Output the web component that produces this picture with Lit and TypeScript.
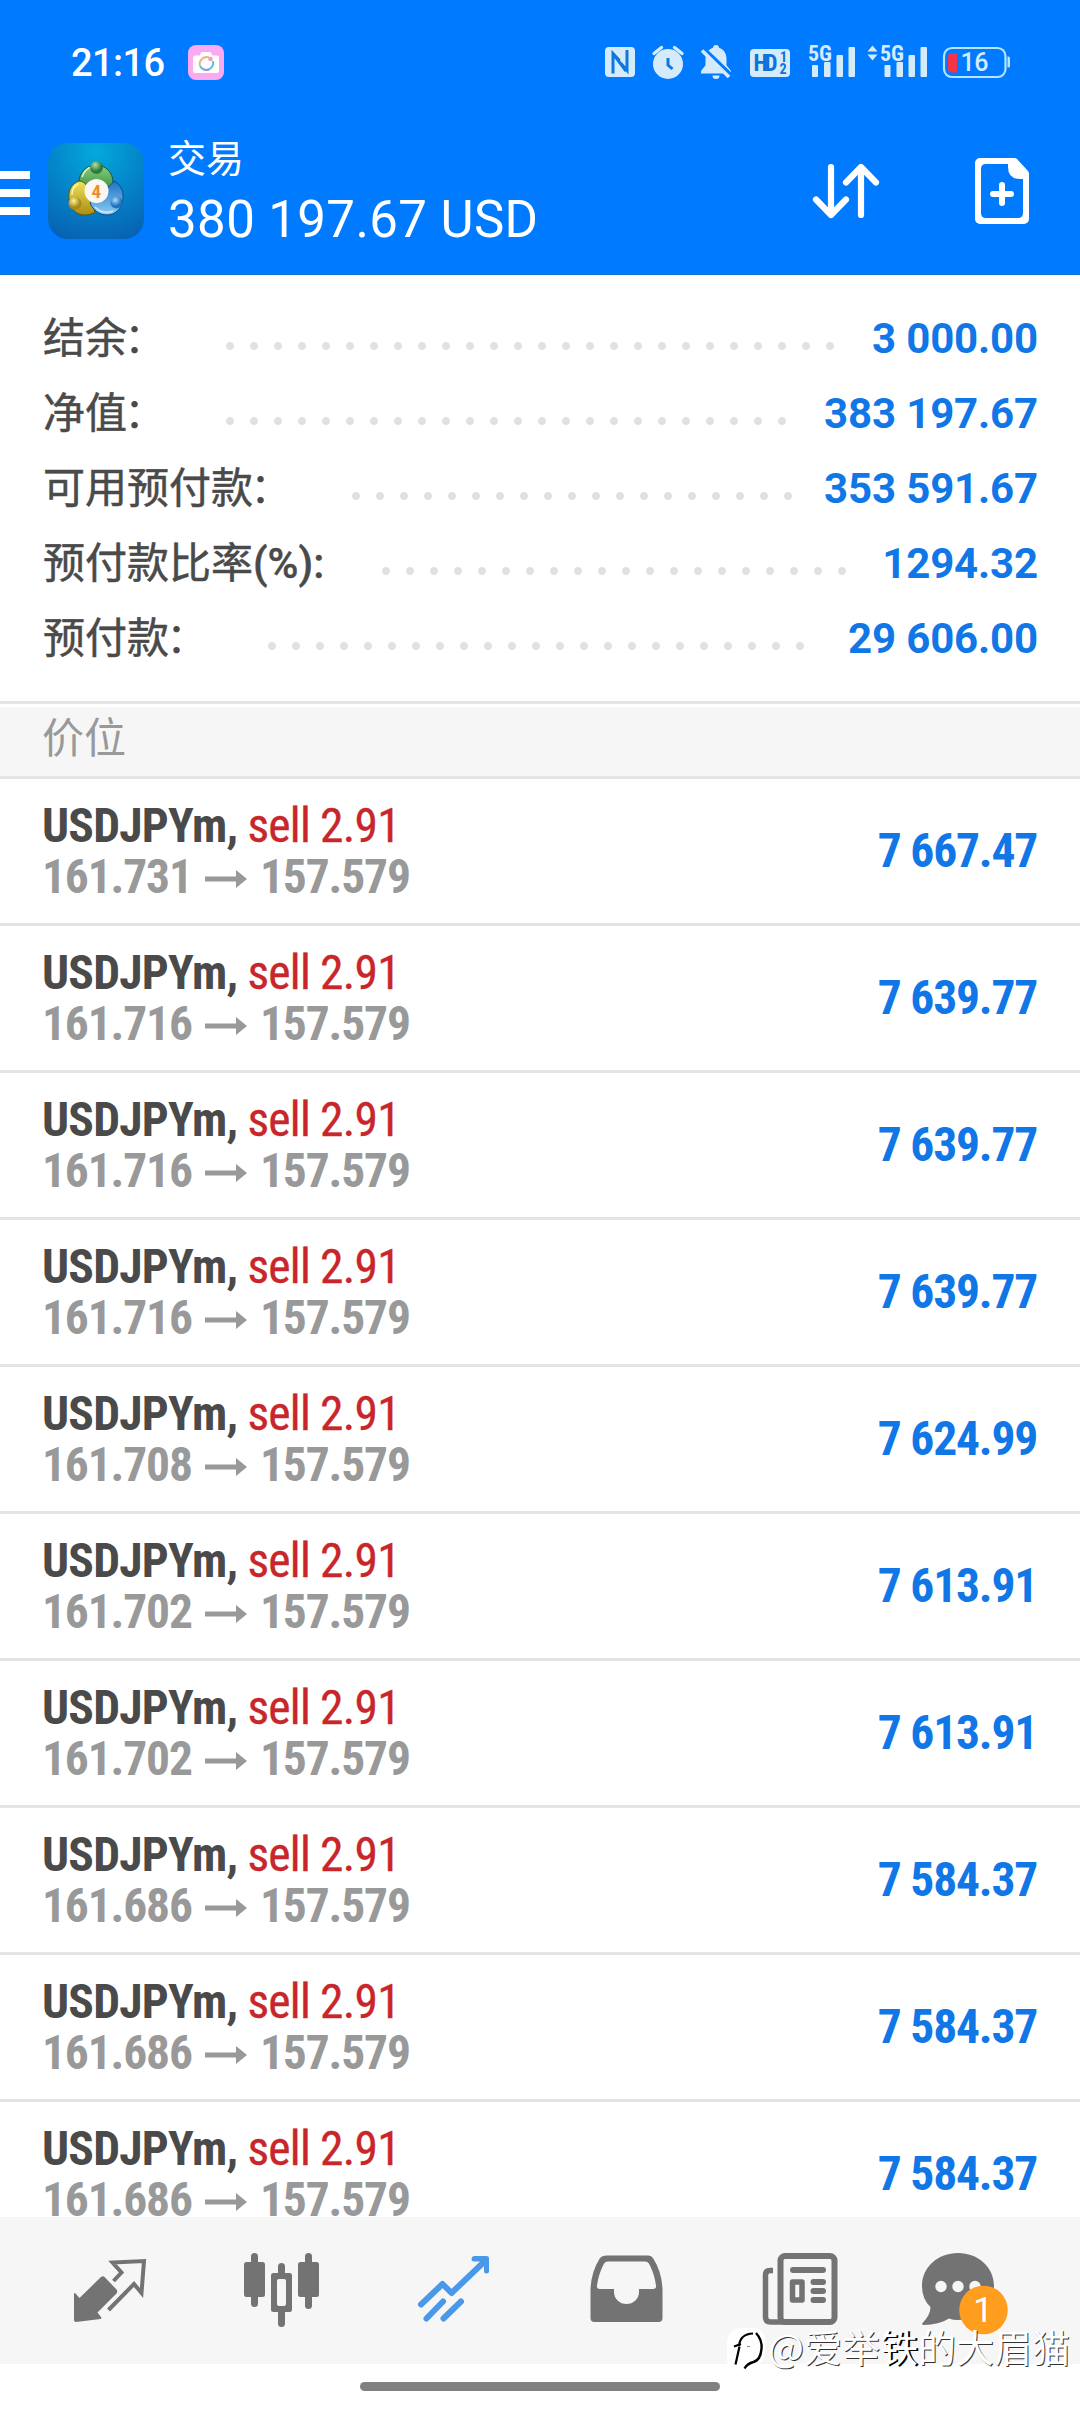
import { LitElement, html, css, svg } from "lit";
import { customElement, property } from "lit/decorators.js";

interface SummaryItem {
  label: string;
  value: string;
  dots: number;
}

interface Position {
  open: string;
  profit: string;
}

const SUMMARY: SummaryItem[] = [
  { label: "结余：", value: "3 000.00", dots: 26 },
  { label: "净值：", value: "383 197.67", dots: 24 },
  { label: "可用预付款：", value: "353 591.67", dots: 19 },
  { label: "预付款比率(%):", value: "1294.32", dots: 20 },
  { label: "预付款：", value: "29 606.00", dots: 23 },
];

const POSITIONS: Position[] = [
  { open: "161.731", profit: "7 667.47" },
  { open: "161.716", profit: "7 639.77" },
  { open: "161.716", profit: "7 639.77" },
  { open: "161.716", profit: "7 639.77" },
  { open: "161.708", profit: "7 624.99" },
  { open: "161.702", profit: "7 613.91" },
  { open: "161.702", profit: "7 613.91" },
  { open: "161.686", profit: "7 584.37" },
  { open: "161.686", profit: "7 584.37" },
  { open: "161.686", profit: "7 584.37" },
];

@customElement("status-bar")
class StatusBar extends LitElement {
  static styles = css`
    :host {
      display: flex;
      align-items: center;
      height: 107px;
      box-sizing: border-box;
      padding: 0 66px 0 71px;
      color: #fff;
    }
    .time {
      font: 500 38px/44px Roboto, "Noto Sans", sans-serif;
      letter-spacing: -0.6px;
      padding-top: 19px;
    }
    .camera {
      width: 36px;
      height: 35px;
      margin: 18px auto 0 24px;
    }
    .icons {
      width: 410px;
      height: 40px;
      margin-top: 17px;
    }
    .tiny {
      font-family: "Roboto Condensed", Roboto, sans-serif;
      font-weight: 700;
    }
    .level {
      font-family: Roboto, sans-serif;
      font-weight: 500;
    }
  `;

  render() {
    return html`
      <span class="time">21:16</span>
      <svg class="camera" viewBox="0 0 36 35">
        <rect width="36" height="35" rx="8" fill="#f9aaf2" />
        <path d="M7 10.500h4.500l2-3.500h9l2 3.500h4.500a2 2 0 0 1 2 2V26a2 2 0 0 1-2 2H7a2 2 0 0 1-2-2V12.500a2 2 0 0 1 2-2z" fill="#fff" />
        <path d="M21 12.500A7 7 0 0 0 12 21" fill="none" stroke="#efb08c" stroke-width="2" />
        <path d="M12 21a7 7 0 0 0 13-5" fill="none" stroke="#5fbfd8" stroke-width="2" />
        <path d="M15 24a7 7 0 0 0 6 .6" fill="none" stroke="#a98be0" stroke-width="2" />
        <circle cx="22.500" cy="14" r="2.300" fill="#f2a0c0" />
      </svg>
      <svg class="icons" viewBox="604 42 410 40" fill="#d4ebfb">
        <rect x="605" y="47" width="30" height="30" rx="4" />
        <path d="M613 73.500V53.500l6.500 7M613 53.500l13 17.500M627 50v20.500l-6-7" fill="none" stroke="#0f78e0" stroke-width="3" />
        <circle cx="668" cy="64" r="15" />
        <path d="M654 53.500l7.500-6M674.500 47.500l7.500 6" stroke="#d4ebfb" stroke-width="3.400" stroke-linecap="round" />
        <path d="M668 58v7l4.500 4" fill="none" stroke="#0f78e0" stroke-width="3" />
        <path d="M716 45a3 3 0 0 1 3 2.800c5 1.600 7.500 6 7.500 11v6.500l4.500 5.700v2.500h-30v-2.500l4.500-5.700v-6.500c0-5 2.500-9.400 7.500-11A3 3 0 0 1 716 45zM712.500 75.500h7a3.500 3.500 0 0 1-7 0z" />
        <path d="M703.500 48.500l28 27" stroke="#007aff" stroke-width="4" />
        <path d="M702 50.500l27 26.500" stroke="#d4ebfb" stroke-width="3.600" />
        <rect x="750" y="49" width="40" height="28" rx="4" />
        <text class="tiny" x="753.500" y="71" font-size="23" fill="#0b74dc" textLength="24">HD</text>
        <text class="tiny" x="780" y="62" font-size="14" fill="#0b74dc">1</text>
        <text class="tiny" x="779.500" y="74" font-size="14" fill="#0b74dc">2</text>
        <text class="tiny" x="808" y="60.500" font-size="22">5G</text>
        <rect x="812" y="65" width="6" height="12" rx="1" />
        <rect x="824" y="62" width="6.500" height="15" rx="1" />
        <rect x="836.500" y="55" width="6.500" height="22" rx="1" />
        <rect x="848.500" y="47" width="6.500" height="30" rx="1" />
        <path d="M867.500 51.500l5-6 5 6zM867.500 54.500l5 6 5-6z" />
        <text class="tiny" x="880" y="60.500" font-size="22">5G</text>
        <rect x="884.500" y="65" width="6" height="12" rx="1" />
        <rect x="896.500" y="62" width="6.500" height="15" rx="1" />
        <rect x="908.500" y="55" width="6.500" height="22" rx="1" />
        <rect x="920.500" y="47" width="6.500" height="30" rx="1" />
        <rect x="944" y="48" width="61.500" height="29" rx="8" fill="none" stroke="#b5e4fb" stroke-width="2.200" />
        <path d="M1007.500 56.500h1a1.500 1.500 0 0 1 1.500 1.500v8a1.500 1.500 0 0 1-1.500 1.500h-1z" fill="#b5e4fb" />
        <path d="M952 53h5v19.500h-5q-4 0-4-4V57q0-4 4-4z" fill="#f5344c" />
        <text class="level" x="960.500" y="71" font-size="25" textLength="28">16</text>
      </svg>
    `;
  }
}

@customElement("app-bar")
class AppBar extends LitElement {
  static styles = css`
    :host {
      display: flex;
      align-items: center;
      height: 168px;
      box-sizing: border-box;
      padding-right: 51px;
      color: #fff;
      box-shadow: inset 0 -1px #1272d0;
    }
    .menu {
      display: flex;
      flex-direction: column;
      gap: 10px;
      width: 30px;
      padding-top: 4px;
      margin-right: 18px;
    }
    .bar {
      height: 8px;
      background: #fff;
    }
    .logo {
      width: 96px;
      height: 96px;
      margin-right: 24px;
    }
    .four {
      font: 700 19px "Roboto Condensed", Roboto, sans-serif;
    }
    .titles {
      flex: 1;
      display: flex;
      flex-direction: column;
      gap: 12px;
      padding-top: 2px;
    }
    .title {
      font: 400 38px/44px "Noto Sans CJK SC", sans-serif;
    }
    .total {
      font: 400 51px/60px Roboto, sans-serif;
      letter-spacing: 0.4px;
    }
    .action {
      display: block;
    }
    .sort {
      width: 72px;
      height: 72px;
      margin-right: 93px;
    }
    .add {
      width: 54px;
      height: 66px;
    }
  `;

  render() {
    return html`
      <div class="menu"><div class="bar"></div><div class="bar"></div><div class="bar"></div></div>
      <svg class="logo" viewBox="0 0 96 96">
        <defs>
          <radialGradient id="bg" cx="0.500" cy="0.100" r="0.950">
            <stop offset="0" stop-color="#03a9dc" />
            <stop offset="0.450" stop-color="#0488cc" />
            <stop offset="1" stop-color="#0862b4" />
          </radialGradient>
          <linearGradient id="gr" x2="0" y2="1"><stop stop-color="#8dcf7c" /><stop offset="1" stop-color="#1f7c38" /></linearGradient>
          <linearGradient id="ye" x2="0" y2="1"><stop stop-color="#efe25c" /><stop offset="1" stop-color="#a98d12" /></linearGradient>
          <linearGradient id="bl" x2="0" y2="1"><stop stop-color="#1f74c4" /><stop offset="1" stop-color="#8ccbf4" /></linearGradient>
          <radialGradient id="gh" cx="0.400" cy="0.300"><stop stop-color="#b5dfa8" /><stop offset="1" stop-color="#2c7a3c" /></radialGradient>
          <radialGradient id="yh" cx="0.400" cy="0.300"><stop stop-color="#fdf3a0" /><stop offset="1" stop-color="#a58a14" /></radialGradient>
          <radialGradient id="bh" cx="0.400" cy="0.300"><stop stop-color="#a8dcff" /><stop offset="1" stop-color="#1d72c0" /></radialGradient>
        </defs>
        <rect width="96" height="96" rx="20" fill="url(#bg)" />
        <path d="M48 22c10 0 17 8 17 17 0 6-3 12-7 15L38 54c-4-3-7-9-7-15 0-9 7-17 17-17z" fill="url(#gr)" stroke="#14563a" />
        <path d="M34 34q3-8 9-10" fill="none" stroke="#d8f2c8" stroke-width="1.500" />
        <path d="M31 38c-8 3-11 10-10 18 1 9 6 15 14 16 5 .5 9-1 12-3L40 44c-3-4-6-6-9-6z" fill="url(#ye)" stroke="#5c5410" />
        <path d="M24 52q0-8 6-11" fill="none" stroke="#fbf6b0" stroke-width="1.500" />
        <path d="M66 38c6 3 10 10 9 18-1 10-8 16-16 16-8 0-14-5-17-12l14-14c4-1 7-4 10-8z" fill="url(#bl)" stroke="#0d4a88" />
        <path d="M47 64q8 8 18 4" fill="none" stroke="#cfeaff" stroke-width="1.500" />
        <circle cx="48.500" cy="48" r="12" fill="#fdf7f2" />
        <text class="four" x="43.500" y="55" fill="#f08c2c">4</text>
        <circle cx="48.500" cy="24.500" r="6.500" fill="url(#gh)" />
        <circle cx="27" cy="60.500" r="6.500" fill="url(#yh)" />
        <circle cx="68.500" cy="59.500" r="6" fill="url(#bh)" />
      </svg>
      <div class="titles">
        <div class="title">交易</div>
        <div class="total">380 197.67 USD</div>
      </div>
      <svg class="action sort" viewBox="810 155 72 72" fill="none" stroke="#fff" stroke-width="6.200" stroke-linecap="round" stroke-linejoin="round">
        <path d="M831 167v48M816 199.500l15 15.500 15-15.500M861 215v-48M846 182.500l15-15.500 15 15.500" />
      </svg>
      <svg class="action add" viewBox="975 158 54 66">
        <path fill="#fff" fill-rule="evenodd" d="M980 158h34.500q1.500 0 2.500 1l11 12q1 1 1 2.500V219a5 5 0 0 1-5 5h-44a5 5 0 0 1-5-5v-56a5 5 0 0 1 5-5zM986 164q-5 0-5 5v44q0 5 5 5h32q5 0 5-5v-34h-3q-12 0-12-12v-3z" />
        <path d="M1002 185v18M993 194h18" stroke="#fff" stroke-width="6" stroke-linecap="round" />
      </svg>
    `;
  }
}

@customElement("summary-row")
class SummaryRow extends LitElement {
  @property({ attribute: false }) item!: SummaryItem;

  static styles = css`
    :host {
      display: flex;
      align-items: center;
      height: 75px;
      line-height: 75px;
    }
    .label {
      font-family: Roboto, "Noto Sans CJK SC", sans-serif;
      font-size: 42px;
      font-weight: 500;
      color: #4a4a4a;
      white-space: nowrap;
    }
    .cjk {
      font-weight: 400;
      -webkit-text-stroke: 0.5px #4a4a4a;
    }
    .colon {
      margin: 0 3px 0 -3px;
      font-weight: 400;
    }
    .ratio {
      margin-right: 1px;
      -webkit-text-stroke: 0.4px #4a4a4a;
    }
    .leader {
      height: 24px;
      margin: 15px 0 0 49px;
      background: radial-gradient(circle at center, #e1e1e1 3.5px, transparent 4.500px) 0 0 / 24px 24px repeat-x;
    }
    .value {
      margin-left: auto;
      font: 700 42px/75px Roboto, sans-serif;
      letter-spacing: -0.15px;
      color: #1177e6;
    }
  `;

  render() {
    const { label, value, dots } = this.item;
    const [, cjk, colon, rest] = label.match(/^([^(：]*)(：?)(.*)$/)!;
    return html`
      <span class="label"
        ><span class="cjk">${cjk}</span>${colon
          ? html`<span class="colon">${colon}</span>`
          : html`<span class="ratio">${rest}</span>`}</span
      >
      <span class="leader" style="width:${dots * 24}px"></span>
      <span class="value">${value}</span>
    `;
  }
}

@customElement("position-row")
class PositionRow extends LitElement {
  @property({ attribute: false }) position!: Position;

  static styles = css`
    :host {
      display: flex;
      align-items: center;
      justify-content: space-between;
      height: 147px;
      box-sizing: border-box;
      padding: 2px 43px 0 42px;
      border-bottom: 3px solid #e4e4e4;
      font: 700 47.5px/51px "Roboto Condensed", Roboto, sans-serif;
      white-space: nowrap;
    }
    .symbol {
      color: #4a4a4a;
      letter-spacing: -0.78px;
    }
    .side {
      font-weight: 400;
      letter-spacing: -0.8px;
      -webkit-text-stroke: 0.3px #c8262a;
      color: #c8262a;
    }
    .prices {
      display: flex;
      align-items: center;
      color: #999;
      letter-spacing: -1.15px;
    }
    .open {
      width: 163px;
    }
    .arrow {
      width: 42px;
      height: 18px;
      margin: 2px 13px 0 0;
    }
    .profit {
      padding-bottom: 2px;
      color: #1177e6;
      letter-spacing: -1.2px;
    }
  `;

  render() {
    const { open, profit } = this.position;
    return html`
      <div>
        <div class="symbol">USDJPYm, <span class="side">sell 2.91</span></div>
        <div class="prices">
          <span class="open">${open}</span>
          <svg class="arrow" viewBox="0 0 42 18" fill="#999"><path d="M0 6.500h31V0l11 9-11 9v-6.500H0z" /></svg>
          <span>157.579</span>
        </div>
      </div>
      <span class="profit">${profit}</span>
    `;
  }
}

const TABS = [
  svg`<g fill="#737373">
    <path d="M74 2294q0-1.500 1.500-.5l4 4.500 21.500-21q2-1.500 3.500 0l12 12.500q1.500 2 0 4l-19 19 3.500 4.500q1 1.500-.5 2l-24.500 3q-2 0-2-2z" />
    <path d="M113.500 2281l8-8.500-9-10 31.500-1.500-2.500 32-7.500-9-25.500 26" fill="none" stroke="#737373" stroke-width="4" />
  </g>`,
  svg`<g fill="#737373">
    <rect x="244" y="2262" width="21" height="35" rx="2.500" /><rect x="251" y="2253" width="7" height="54" rx="3.500" />
    <rect x="298" y="2262" width="21" height="35" rx="2.500" /><rect x="305" y="2253" width="7" height="56" rx="3.500" />
    <rect x="278" y="2263" width="7" height="64" rx="3.500" /><rect x="271" y="2273" width="21" height="39" rx="2.500" />
    <rect x="277" y="2279" width="9" height="27" rx="2" fill="#f6f6f6" />
  </g>`,
  svg`<g fill="none" stroke="#4a98e8" stroke-width="6" stroke-linecap="round">
    <path d="M421 2304.500l21.500-20.500 9 9 34-32.500" stroke-linejoin="round" />
    <path d="M426.500 2318.500l16.500-17M443.500 2318.500l17.500-17" />
    <path d="M474 2256h12.500q2.500 0 2.500 2.500v12.500q0 2.500-2.500 2.500t-2.500-2.500v-5l-4.500-4.500h-5.500q-2.500 0-2.500-2.500t2.500-3z" fill="#4a98e8" stroke="none" />
  </g>`,
  svg`<path fill="#737373" fill-rule="evenodd" d="M606 2255.500h42.500q3 0 4.500 2.500 9.500 15 9.500 33v27q0 4-4 4h-64q-4 0-4-4v-27q0-18 9.500-33 2-2.500 6-2.500zM608 2261.500q-3 0-4.500 3-5 10-6.500 21-.5 3.500 3 3.500h14v3a12.500 12 0 0 0 25 0v-3h14q3.500 0 3-3.500-1.500-11-6.500-21-1.500-3-4.500-3z" />`,
  svg`<g fill="none" stroke="#737373">
    <rect x="780.500" y="2256" width="54" height="66" rx="4.500" stroke-width="6" />
    <path d="M773 2270.500h-3q-4.500 0-4.500 4.500v42q0 5 5 5H785" stroke-width="5.500" />
    <path d="M793 2270h30M813.500 2282h9.500M813.500 2291h9.500M813.500 2300h9.500" stroke-width="6" stroke-linecap="round" />
    <rect x="792.500" y="2282" width="9.500" height="18" stroke-width="5.500" stroke-linejoin="round" />
  </g>`,
  svg`<g fill="#737373">
    <path d="M958 2253c20 0 36 14 36 33s-16 34-36 34q-5 0-9-1.500-10 6.500-25.500 6.500-2 0-1-2 8-8 8-16-8.500-8-8.500-21c0-19 16-33 36-33z" />
    <g fill="#f6f6f6"><circle cx="941" cy="2286.500" r="5.700" /><circle cx="958" cy="2286.500" r="5.700" /><circle cx="975" cy="2286.500" r="5.700" /></g>
    <circle cx="983.500" cy="2310" r="24.300" fill="#ff9d1e" />
    <text class="badge" x="983" y="2322" text-anchor="middle" fill="#fff">1</text>
  </g>`,
];

@customElement("tab-bar")
class TabBar extends LitElement {
  static styles = css`
    :host {
      display: grid;
      grid-template-columns: repeat(6, 172px);
      justify-content: center;
      justify-items: center;
      height: 147px;
      box-sizing: border-box;
      padding-top: 33px;
      background: #f6f6f6;
    }
    .tab {
      width: 80px;
      height: 80px;
      overflow: visible;
    }
    .badge {
      font: 400 35px Roboto, sans-serif;
    }
  `;

  render() {
    return TABS.map((icon, i) => html`<svg class="tab" viewBox="${70 + i * 172} 2250 80 80">${icon}</svg>`);
  }
}

@customElement("app-root")
class AppRoot extends LitElement {
  static styles = css`
    :host {
      display: flex;
      flex-direction: column;
      position: relative;
      width: 1080px;
      height: 2412px;
      overflow: hidden;
      background: #fff;
    }
    .header {
      flex: none;
      background: #007aff;
    }
    .summary {
      flex: none;
      padding: 26px 42px 25px 43px;
      border-bottom: 3px solid #e4e4e4;
    }
    .section {
      flex: none;
      height: 75px;
      box-sizing: border-box;
      padding-left: 42px;
      border-top: 3px solid #fff;
      border-bottom: 3px solid #e4e4e4;
      background: #f6f6f6;
      font: 400 42px/56px "Noto Sans CJK SC", sans-serif;
      color: #999;
    }
    .list {
      flex: 1;
      min-height: 0;
      overflow: hidden;
    }
    .gesture {
      flex: none;
      display: flex;
      justify-content: center;
      height: 48px;
      box-sizing: border-box;
      padding-top: 18px;
    }
    .pill {
      width: 360px;
      height: 9px;
      border-radius: 5px;
      background: #808080;
    }
    .watermark {
      position: absolute;
      left: 725px;
      top: 2320px;
      display: flex;
      align-items: center;
      gap: 3px;
      font: 400 38px/52px "Noto Sans CJK SC", sans-serif;
      color: #fff;
      text-shadow: 1px 1px 0 #333;
      white-space: nowrap;
    }
    .strong {
      text-shadow: 2px 1px 0 #000;
    }
    .mark {
      width: 40px;
      height: 46px;
      padding-top: 5px;
    }
  `;

  render() {
    return html`
      <div class="header"><status-bar></status-bar><app-bar></app-bar></div>
      <div class="summary">${SUMMARY.map((s) => html`<summary-row .item=${s}></summary-row>`)}</div>
      <div class="section">价位</div>
      <div class="list">${POSITIONS.map((p) => html`<position-row .position=${p}></position-row>`)}</div>
      <tab-bar></tab-bar>
      <div class="gesture"><div class="pill"></div></div>
      <div class="watermark">
        <svg class="mark" viewBox="0 0 40 46">
          <path d="M14 2h16q10 2 10 14v10q-1 12-10 14l-10 5-14-3q-4-3-4-9V14Q4 4 14 2z" fill="#fff" />
          <path d="M10.500 38.500l4-18M9 20.500l7-2.500M14 20q1-12 14-12.500" fill="none" stroke="#000" stroke-width="2.200" />
          <path d="M31 7q6.500 7 5.500 16-1 11-8 13-6 1.500-9 6.500" fill="none" stroke="#000" stroke-width="2.400" />
          <path d="M22 20.500h3" stroke="#888" />
        </svg>
        <span>@爱举<span class="strong">铁</span>的大眉猫</span>
      </div>
    `;
  }
}
